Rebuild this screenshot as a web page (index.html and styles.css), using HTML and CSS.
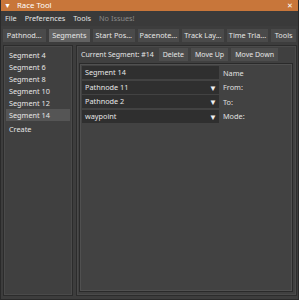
FILE: index.html
```html
<!DOCTYPE html>
<html>
<head>
<meta charset="utf-8">
<link rel="stylesheet" href="styles.css">
</head>
<body>
<div class="window">
  <div class="titlebar">
    <span class="collapse">&#9660;</span>
    <span class="title">Race Tool</span>
    <span class="close">&#10005;</span>
  </div>
  <div class="menubar">
    <span class="menu">File</span>
    <span class="menu">Preferences</span>
    <span class="menu">Tools</span>
    <span class="menu dim">No Issues!</span>
  </div>
  <div class="tabs">
    <span class="tab">Pathnod...</span>
    <span class="tab active">Segments</span>
    <span class="tab">Start Pos...</span>
    <span class="tab">Pacenote...</span>
    <span class="tab">Track Lay...</span>
    <span class="tab">Time Tria...</span>
    <span class="tab">Tools</span>
  </div>
  <div class="content">
    <div class="list">
      <div class="item">Segment 4</div>
      <div class="item">Segment 6</div>
      <div class="item">Segment 8</div>
      <div class="item">Segment 10</div>
      <div class="item">Segment 12</div>
      <div class="item selected">Segment 14</div>
      <div class="item create">Create</div>
    </div>
    <div class="detail">
      <div class="toolbar">
        <span class="current">Current Segment: #14</span>
        <span class="btn">Delete</span>
        <span class="btn">Move Up</span>
        <span class="btn">Move Down</span>
      </div>
      <div class="inner">
        <div class="row">
          <div class="field">Segment 14</div>
          <span class="label">Name</span>
        </div>
        <div class="row">
          <div class="field combo">Pathnode 11<span class="arrow">&#9660;</span></div>
          <span class="label">From:</span>
        </div>
        <div class="row">
          <div class="field combo">Pathnode 2<span class="arrow">&#9660;</span></div>
          <span class="label">To:</span>
        </div>
        <div class="row">
          <div class="field combo">waypoint<span class="arrow">&#9660;</span></div>
          <span class="label">Mode:</span>
        </div>
      </div>
    </div>
  </div>
</div>
</body>
</html>
```

FILE: styles.css
```css
html, body {
  margin: 0;
  padding: 0;
  width: 299px;
  height: 300px;
  overflow: hidden;
  background: #3c3c3c;
}
.window {
  width: 299px;
  height: 300px;
  box-sizing: border-box;
  background: #3d3d3d;
  font-family: "Noto Sans", "Open Sans", sans-serif;
  font-size: 7.3px;
  color: #e6e6e6;
  display: flex;
  flex-direction: column;
  border-left: 1px solid #2a2a2a;
  border-right: 1px solid #2a2a2a;
  border-bottom: 1px solid #2a2a2a;
  white-space: nowrap;
}
.titlebar {
  height: 11px;
  background: #c8763a;
  display: flex;
  align-items: center;
  padding: 0 5px 0 3px;
  color: #fff;
  line-height: 11px;
}
.collapse {
  font-size: 7px;
  width: 10px;
}
.title {
  flex: 1;
  margin-left: 3px;
  font-size: 7.8px;
}
.close {
  font-size: 7px;
}
.menubar {
  height: 15px;
  display: flex;
  align-items: center;
  padding: 0 4px;
  gap: 8px;
  background: #3a3a3a;
  line-height: 15px;
}
.menu.dim {
  color: #8a8a8a;
}
.tabs {
  display: flex;
  gap: 3px;
  padding: 3px 2px 0 2px;
  height: 13px;
}
.tab {
  background: #4a4a4a;
  height: 13px;
  line-height: 13px;
  width: 42px;
  text-align: center;
  overflow: hidden;
}
.tab:first-child {
  width: 43px;
}
.tab:last-child {
  width: 25px;
}
.tab.active {
  background: #626262;
}
.content {
  flex: 1;
  display: flex;
  gap: 3px;
  padding: 3px 1px 3px 2px;
}
.list {
  width: 70px;
  flex: none;
  border: 1px solid #2c2c2c;
  box-shadow: inset 0 0 0 1px #4a4a4a;
  background: #404040;
  padding: 3px 2px;
  box-sizing: border-box;
}
.item {
  height: 12px;
  line-height: 12px;
  padding-left: 3px;
}
.item.selected {
  background: #555555;
}
.item.create {
  margin-top: 2px;
}
.detail {
  flex: 1;
  border: 1px solid #2c2c2c;
  box-shadow: inset 0 0 0 1px #4a4a4a;
  background: #404040;
  padding: 2px 3px 3px 2px;
  display: flex;
  flex-direction: column;
}
.toolbar {
  display: flex;
  align-items: center;
  gap: 3px;
  height: 13px;
  margin-bottom: 2px;
}
.current {
  margin-left: 2px;
  margin-right: 2px;
  font-size: 7px;
}
.btn {
  background: #4d4d4d;
  height: 13px;
  line-height: 13px;
  padding: 0 4px;
  font-size: 7px;
}
.inner {
  flex: 1;
  border: 1px solid #2a2a2a;
  box-shadow: inset 0 0 0 1px #505050;
  background: #424242;
  padding: 2px 3px 2px 2px;
  display: flex;
  flex-direction: column;
  gap: 1.5px;
}
.row {
  display: flex;
  align-items: center;
  gap: 4px;
}
.field {
  width: 137px;
  height: 13px;
  line-height: 13px;
  background: #2f2f2f;
  padding-left: 3px;
  box-sizing: border-box;
  display: flex;
  align-items: center;
}
.combo .arrow {
  margin-left: auto;
  margin-right: 2px;
  font-size: 8px;
  color: #f0f0f0;
}
.label {
  color: #e0e0e0;
}
```
